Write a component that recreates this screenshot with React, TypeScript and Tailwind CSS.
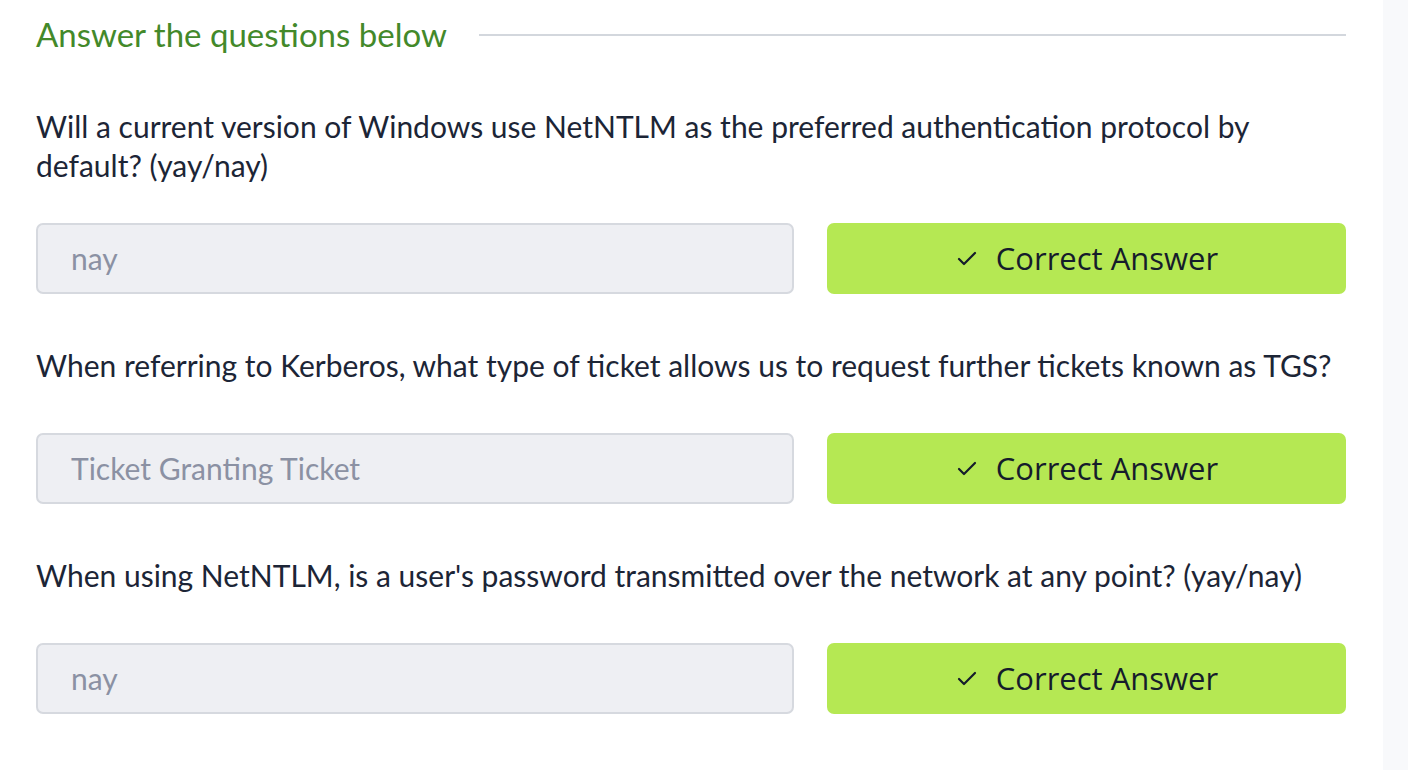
import { Check } from 'lucide-react';

type Question = { text: string; answer: string; wraps?: boolean };

const questions: Question[] = [
  {
    text: 'Will a current version of Windows use NetNTLM as the preferred authentication protocol by default? (yay/nay)',
    answer: 'nay',
    wraps: true,
  },
  {
    text: 'When referring to Kerberos, what type of ticket allows us to request further tickets known as TGS?',
    answer: 'Ticket Granting Ticket',
  },
  {
    text: "When using NetNTLM, is a user's password transmitted over the network at any point? (yay/nay)",
    answer: 'nay',
  },
];

function QuestionBlock({ q }: { q: Question }) {
  return (
    <div className="flex flex-col">
      <p className="text-[30px] leading-[39px] text-[#1c2536]">{q.text}</p>
      <div className={q.wraps ? 'mt-[38px] flex gap-[33px]' : 'mt-[48px] flex gap-[33px]'}>
        <div className="flex h-[71px] w-[758px] items-center rounded-[7px] border-2 border-[#d6d9df] bg-[#eeeff3] px-[33px] text-[30px] text-[#8b91a3]">
          {q.answer}
        </div>
        <button className="flex h-[71px] flex-1 items-center justify-center gap-[17px] rounded-[7px] bg-[#b5e853] text-[31px] text-[#151c2b] [font-family:'Open_Sans',sans-serif]">
          <Check size={24} strokeWidth={2.2} />
          <span>Correct Answer</span>
        </button>
      </div>
    </div>
  );
}

export default function App() {
  return (
    <div className="flex h-[770px] w-[1408px] overflow-hidden bg-white font-['Lato',sans-serif]">
      <div className="w-[1383px] pl-[36px] pr-[37px]">
        <div className="flex h-[70px] items-center gap-[32px]">
          <h2 className="text-[33px] text-[#43892a]">Answer the questions below</h2>
          <div className="h-[2px] flex-1 bg-[#d3d7dd]" />
        </div>
        <div className="mt-[37px] flex flex-col gap-[52px]">
          {questions.map((q, i) => (
            <QuestionBlock key={i} q={q} />
          ))}
        </div>
      </div>
      <div className="flex-1 bg-[#f8f9fb]" />
    </div>
  );
}
